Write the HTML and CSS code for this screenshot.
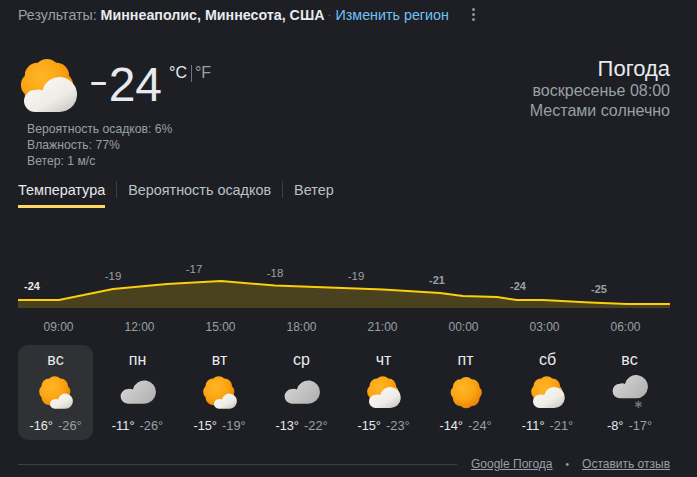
FILE: index.html
```html
<!DOCTYPE html>
<html lang="ru">
<head>
<meta charset="utf-8">
<title>Погода</title>
<link rel="stylesheet" href="styles.css">
</head>
<body>
<svg class="defs" width="0" height="0" aria-hidden="true">
  <defs>
    <radialGradient id="sunGrad" gradientUnits="userSpaceOnUse" cx="19" cy="17" r="34">
      <stop offset="0" stop-color="#ffb627"/>
      <stop offset="0.5" stop-color="#fca513"/>
      <stop offset="1" stop-color="#e67c00"/>
    </radialGradient>
    <linearGradient id="whiteGrad" x1="0.1" y1="0.1" x2="0.9" y2="1">
      <stop offset="0" stop-color="#fbf9f5"/>
      <stop offset="0.6" stop-color="#efece6"/>
      <stop offset="1" stop-color="#c9c6c2"/>
    </linearGradient>
    <linearGradient id="greyGrad" x1="0" y1="0" x2="1" y2="0.6">
      <stop offset="0" stop-color="#d9d9d9"/>
      <stop offset="1" stop-color="#b4b4b4"/>
    </linearGradient>
    <path id="sunShape" d="M43.4 16A11 11 0 0 1 43.4 32A11 11 0 0 1 32 43.400A11 11 0 0 1 16 43.400A11 11 0 0 1 4.600 32A11 11 0 0 1 4.600 16A11 11 0 0 1 16 4.600A11 11 0 0 1 32 4.600A11 11 0 0 1 43.400 16Z"/>
    <path id="cloudShape" d="M11 35H35.5A17.5 17.5 0 1 0 18.5 13.5A11 11 0 0 0 11 13A11 11 0 0 0 11 35Z"/>
    <symbol id="iconSunCloud" viewBox="0 0 60 60">
      <use href="#sunShape" fill="url(#sunGrad)" transform="translate(0.600 0.600) scale(1.14)"/>
      <use href="#cloudShape" fill="url(#whiteGrad)" transform="translate(5 20)"/>
    </symbol>
    <symbol id="iconSunSmallCloud" viewBox="0 0 60 60">
      <use href="#sunShape" fill="url(#sunGrad)" transform="translate(0.600 0.600) scale(1.14)"/>
      <use href="#cloudShape" fill="url(#whiteGrad)" transform="translate(20 31) scale(0.72)"/>
    </symbol>
    <symbol id="iconSun" viewBox="0 0 60 60">
      <use href="#sunShape" fill="url(#sunGrad)" transform="translate(3 2) scale(1.14)"/>
    </symbol>
    <symbol id="iconCloud" viewBox="0 0 60 60">
      <use href="#cloudShape" fill="url(#greyGrad)" transform="translate(1 9) scale(1.11)"/>
    </symbol>
    <symbol id="iconSnowCloud" viewBox="0 0 60 60">
      <use href="#cloudShape" fill="url(#greyGrad)" transform="translate(1 0) scale(1.11)"/>
      <g class="snow-flake">
        <path d="M44 43V55M38.800 46L49.200 52M49.200 46L38.800 52"/>
      </g>
    </symbol>
  </defs>
</svg>

<main class="weather">
  <header class="location">
    <span class="location-label">Результаты: </span><strong class="location-name">Миннеаполис, Миннесота, США</strong>
    <span class="location-sep">·</span>
    <a class="location-link">Изменить регион</a>
    <span class="menu-dots"><i></i><i></i><i></i></span>
  </header>

  <section class="summary">
    <div class="now">
      <div class="now-main">
        <svg class="now-icon"><use href="#iconSunCloud"/></svg>
        <span class="now-temp"><span class="now-minus">–</span>24</span>
        <span class="now-units"><span class="unit-active">°C</span><span class="unit-sep"></span><span class="unit-other">°F</span></span>
      </div>
      <ul class="details">
        <li>Вероятность осадков: 6%</li>
        <li>Влажность: 77%</li>
        <li>Ветер: 1 м/с</li>
      </ul>
    </div>
    <div class="title-block">
      <div class="title">Погода</div>
      <div class="subtitle">воскресенье 08:00</div>
      <div class="subtitle">Местами солнечно</div>
    </div>
  </section>

  <nav class="tabs">
    <span class="tab tab-active">Температура</span>
    <span class="tab">Вероятность осадков</span>
    <span class="tab">Ветер</span>
  </nav>

  <svg class="chart" viewBox="0 0 652 101" width="652" height="101">
    <path class="chart-area" d="M0 86H41L95 75L149 70L203 67L257 71.500L311 73.500L365 75.500L422 79L445 82L479 83L499 86H525L572 88.500L609 90H652V94H0Z"/>
    <path class="chart-line" d="M0 86H41L95 75L149 70L203 67L257 71.500L311 73.500L365 75.500L422 79L445 82L479 83L499 86H525L572 88.500L609 90H652"/>
    <text class="chart-label chart-label-now" x="14" y="76">-24</text>
    <text class="chart-label" x="95" y="66">-19</text>
    <text class="chart-label" x="176" y="59">-17</text>
    <text class="chart-label" x="257" y="63">-18</text>
    <text class="chart-label" x="338" y="66">-19</text>
    <text class="chart-label chart-label-strong" x="419" y="70">-21</text>
    <text class="chart-label chart-label-strong" x="500" y="76">-24</text>
    <text class="chart-label chart-label-strong" x="581" y="79">-25</text>
  </svg>

  <div class="hours">
    <span>09:00</span><span>12:00</span><span>15:00</span><span>18:00</span><span>21:00</span><span>00:00</span><span>03:00</span><span>06:00</span>
  </div>

  <div class="days">
    <div class="day day-active">
      <div class="day-name">вс</div>
      <svg class="day-icon"><use href="#iconSunSmallCloud"/></svg>
      <div class="day-temps"><b>-16°</b><span>-26°</span></div>
    </div>
    <div class="day">
      <div class="day-name">пн</div>
      <svg class="day-icon"><use href="#iconCloud"/></svg>
      <div class="day-temps"><b>-11°</b><span>-26°</span></div>
    </div>
    <div class="day">
      <div class="day-name">вт</div>
      <svg class="day-icon"><use href="#iconSunSmallCloud"/></svg>
      <div class="day-temps"><b>-15°</b><span>-19°</span></div>
    </div>
    <div class="day">
      <div class="day-name">ср</div>
      <svg class="day-icon"><use href="#iconCloud"/></svg>
      <div class="day-temps"><b>-13°</b><span>-22°</span></div>
    </div>
    <div class="day">
      <div class="day-name">чт</div>
      <svg class="day-icon"><use href="#iconSunCloud"/></svg>
      <div class="day-temps"><b>-15°</b><span>-23°</span></div>
    </div>
    <div class="day">
      <div class="day-name">пт</div>
      <svg class="day-icon"><use href="#iconSun"/></svg>
      <div class="day-temps"><b>-14°</b><span>-24°</span></div>
    </div>
    <div class="day">
      <div class="day-name">сб</div>
      <svg class="day-icon"><use href="#iconSunCloud"/></svg>
      <div class="day-temps"><b>-11°</b><span>-21°</span></div>
    </div>
    <div class="day">
      <div class="day-name">вс</div>
      <svg class="day-icon"><use href="#iconSnowCloud"/></svg>
      <div class="day-temps"><b>-8°</b><span>-17°</span></div>
    </div>
  </div>

  <footer class="footer">
    <div class="footer-rule"></div>
    <a class="footer-link">Google Погода</a>
    <span class="footer-dot">•</span>
    <a class="footer-link">Оставить отзыв</a>
  </footer>
</main>
</body>
</html>
```
FILE: styles.css
```css
* { box-sizing: border-box; }

html, body {
  margin: 0;
  height: 100%;
  background: #1d1f24;
  overflow: hidden;
}

body {
  font-family: "Liberation Sans", Arial, sans-serif;
  color: #e8eaed;
}

.defs { display: block; height: 0; }

.weather {
  width: 670px;
  padding-left: 18px;
}

/* header */
.location {
  height: 30px;
  display: flex;
  align-items: center;
  font-size: 14.2px;
  white-space: pre;
  color: #9aa0a6;
}
.location-name { color: #e8eaed; font-size: 14.25px; }
.location-sep { margin: 0 4px 0 3px; color: #70757a; font-size: 12px; }
.location-link { color: #71c2f5; font-size: 14.3px; }
.menu-dots {
  margin: 0 0 2px 23px;
  display: flex;
  flex-direction: column;
  gap: 2px;
}
.menu-dots i {
  display: block;
  width: 3px;
  height: 3px;
  border-radius: 50%;
  background: #8f9499;
}

/* summary */
.summary {
  display: flex;
  justify-content: space-between;
  height: 141px;
  padding-top: 27px;
}
.now-main {
  display: flex;
  align-items: flex-start;
  height: 64px;
}
.now-icon {
  width: 60px;
  height: 60px;
  margin-left: 1px;
}
.now-temp {
  margin: -2px 0 0 11.6px;
  font-size: 48px;
  line-height: 54px;
  color: #e8eaed;
}
.now-minus {
  font-size: 29px;
  font-weight: 700;
  vertical-align: 9px;
  margin-right: 1.9px;
}
.now-units {
  display: flex;
  align-items: center;
  margin: 7px 0 0 7px;
  font-size: 16px;
  line-height: 18px;
}
.unit-active { color: #e8eaed; }
.unit-other { color: #9aa0a6; }
.unit-sep {
  width: 1px;
  height: 17px;
  margin: 0 3px 0 4px;
  background: #70757a;
}
.details {
  list-style: none;
  margin: 0 0 0 9px;
  padding: 0;
  font-size: 12.2px;
  line-height: 16px;
  color: #9aa0a6;
}

.title-block { text-align: right; }
.title {
  font-size: 22px;
  line-height: 24px;
  color: #e8eaed;
}
.subtitle {
  font-size: 16px;
  line-height: 20px;
  color: #9aa0a6;
}

/* tabs */
.tabs {
  display: flex;
  height: 37px;
  font-size: 14.4px;
  color: #bdc1c6;
}
.tab {
  position: relative;
  margin-right: 23px;
  padding-top: 10px;
  height: 37px;
  line-height: 18px;
}
.tab + .tab::before {
  content: "";
  position: absolute;
  left: -12px;
  top: 10px;
  width: 1px;
  height: 17px;
  background: #3c4043;
}
.tab-active {
  color: #e8eaed;
  border-bottom: 3px solid #fdd663;
}

/* chart */
.chart {
  display: block;
  margin-top: 6px;
}
.chart-area { fill: #4a421f; }
.chart-line {
  fill: none;
  stroke: #fdcf09;
  stroke-width: 2;
}
.chart-label {
  font-size: 11.5px;
  fill: #9aa0a6;
  text-anchor: middle;
}
.chart-label-strong {
  font-size: 11px;
  font-weight: 700;
}
.chart-label-now {
  font-size: 11px;
  font-weight: 700;
  fill: #e8eaed;
}

/* hours */
.hours {
  display: flex;
  margin-top: 4px;
  height: 26px;
  font-size: 12px;
  line-height: 16px;
  color: #9aa0a6;
}
.hours span {
  width: 81px;
  text-align: center;
}

/* days */
.days {
  display: grid;
  grid-template-columns: repeat(8, 75px);
  gap: 7px;
}
.day {
  height: 95px;
  border-radius: 10px;
  text-align: center;
  padding-top: 7px;
}
.day-active { background: #2f3135; }
.day-name {
  font-size: 16px;
  line-height: 16px;
  color: #e8eaed;
}
.day-icon {
  display: block;
  width: 36px;
  height: 36px;
  margin: 7px auto 0;
}
.day-temps {
  margin-top: 7px;
  font-size: 12.8px;
  line-height: 16px;
  white-space: nowrap;
  color: #9aa0a6;
}
.day-temps b {
  font-weight: 400;
  color: #e8eaed;
  margin-right: 5px;
}
.snow-flake path {
  fill: none;
  stroke: #70757a;
  stroke-width: 2.4;
}

/* footer */
.footer {
  display: flex;
  align-items: center;
  margin-top: 16px;
  height: 16px;
  font-size: 12px;
  color: #9aa0a6;
}
.footer-rule {
  flex: 1;
  height: 1px;
  background: #3c4043;
  margin-right: 14px;
}
.footer-link { text-decoration: underline; }
.footer-dot { margin: 0 13px; font-size: 10px; }
```
